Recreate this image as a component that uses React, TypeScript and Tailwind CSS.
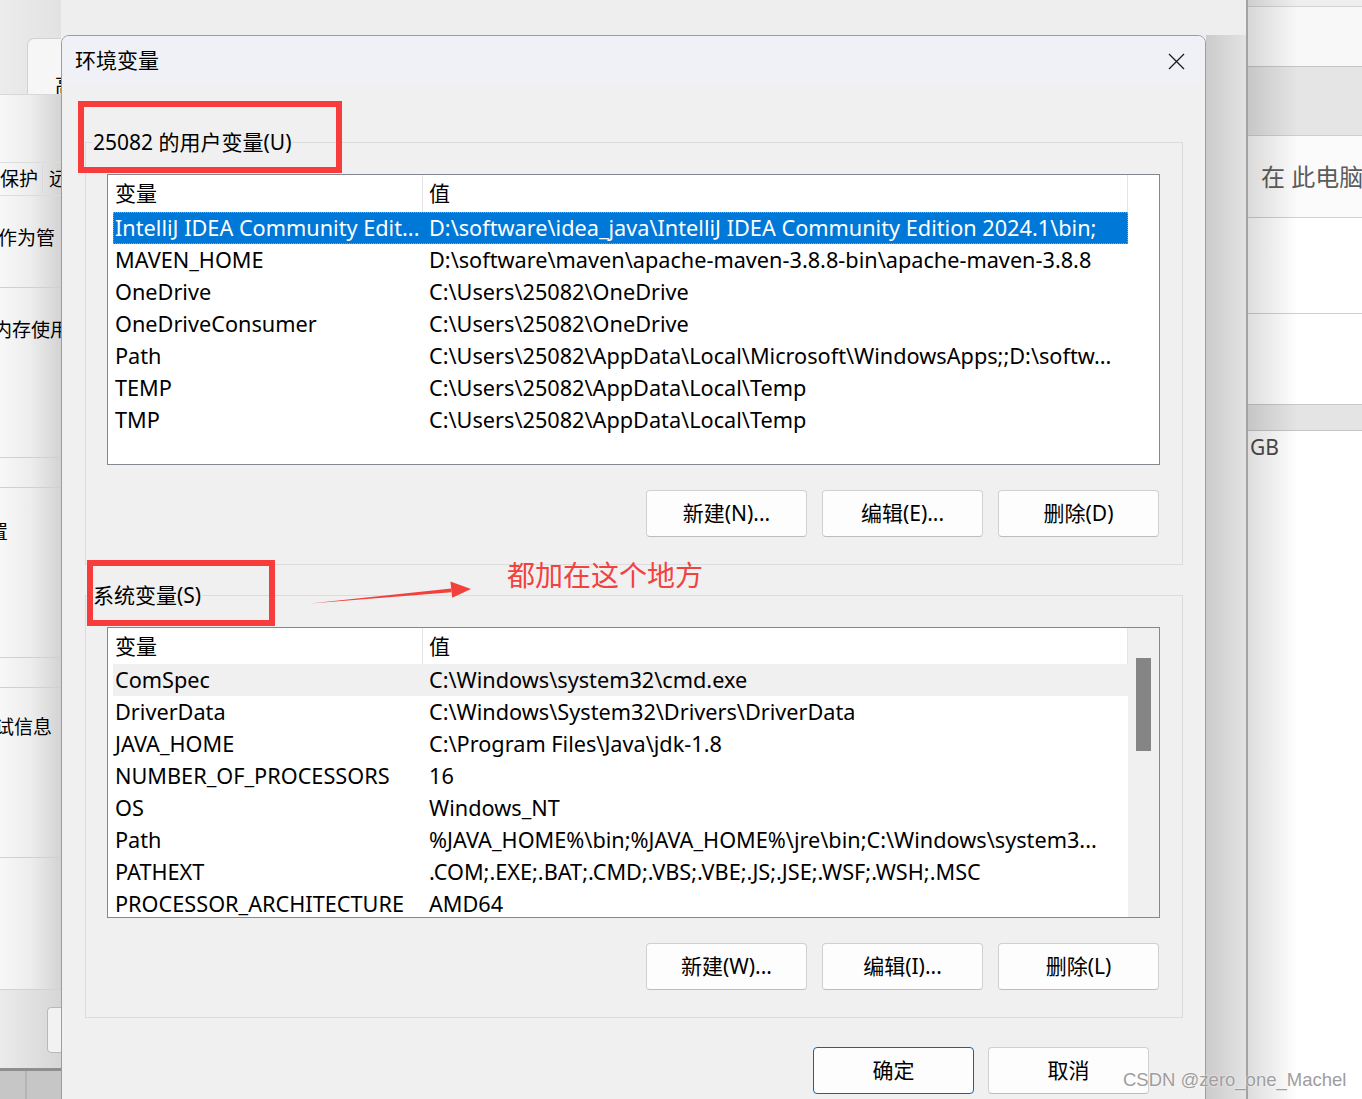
import React from "react";

type Row = [string, string];

const userRows: Row[] = [
  ["IntelliJ IDEA Community Edit...", "D:\\software\\idea_java\\IntelliJ IDEA Community Edition 2024.1\\bin;"],
  ["MAVEN_HOME", "D:\\software\\maven\\apache-maven-3.8.8-bin\\apache-maven-3.8.8"],
  ["OneDrive", "C:\\Users\\25082\\OneDrive"],
  ["OneDriveConsumer", "C:\\Users\\25082\\OneDrive"],
  ["Path", "C:\\Users\\25082\\AppData\\Local\\Microsoft\\WindowsApps;;D:\\softw..."],
  ["TEMP", "C:\\Users\\25082\\AppData\\Local\\Temp"],
  ["TMP", "C:\\Users\\25082\\AppData\\Local\\Temp"],
];

const systemRows: Row[] = [
  ["ComSpec", "C:\\Windows\\system32\\cmd.exe"],
  ["DriverData", "C:\\Windows\\System32\\Drivers\\DriverData"],
  ["JAVA_HOME", "C:\\Program Files\\Java\\jdk-1.8"],
  ["NUMBER_OF_PROCESSORS", "16"],
  ["OS", "Windows_NT"],
  ["Path", "%JAVA_HOME%\\bin;%JAVA_HOME%\\jre\\bin;C:\\Windows\\system3..."],
  ["PATHEXT", ".COM;.EXE;.BAT;.CMD;.VBS;.VBE;.JS;.JSE;.WSF;.WSH;.MSC"],
  ["PROCESSOR_ARCHITECTURE", "AMD64"],
];

function VarList({ rows, headerClass, selected, hovered, scroll }: {
  rows: Row[];
  headerClass: string;
  selected?: number;
  hovered?: number;
  scroll?: boolean;
}) {
  return (
    <div className="flex h-[291px] overflow-hidden border border-[#828790] bg-white">
      <div className="w-[1020px] shrink-0 overflow-hidden pl-[5px]">
        {/* cabecera */}
        <div className={`flex ${headerClass} text-[21px] leading-none`}>
          <div className="flex h-full w-[310px] items-center border-r border-[#e5e5e5] pl-[2px]">变量</div>
          <div className="flex h-full flex-1 items-center border-r border-[#e5e5e5] pl-[6px]">值</div>
        </div>
        {rows.map((r, i) => {
          const sel = i === selected;
          const hov = i === hovered;
          return (
            <div
              key={i}
              className={`flex h-[32px] whitespace-nowrap text-[21.7px] leading-[31px] ${
                sel ? "bg-[#0078d7] text-white outline-1 -outline-offset-1 outline-dotted outline-[#d98f3e]" : hov ? "bg-[#f0f0f0]" : ""
              }`}
            >
              <div className="w-[314px] shrink-0 overflow-hidden pl-[2px]">{r[0]}</div>
              <div className="flex-1 overflow-hidden pl-[2px]">{r[1]}</div>
            </div>
          );
        })}
      </div>
      {scroll ? (
        <div className="flex-1 bg-[#f0f0f0] pl-[8px] pt-[30px]">
          <div className="h-[93px] w-[15px] bg-[#858585]" />
        </div>
      ) : null}
    </div>
  );
}

function Btn({ label, primary }: { label: string; primary?: boolean }) {
  return (
    <button
      className={`flex h-[47px] w-[161px] items-center justify-center rounded-[4px] border bg-[#fdfdfd] text-[21px] leading-none ${
        primary ? "border-[#0067c0]" : "border-[#d0d0d0] border-b-[#bdbdbd]"
      }`}
    >
      {label}
    </button>
  );
}

function GroupBox({ title, children, className = "" }: { title: string; children: React.ReactNode; className?: string }) {
  return (
    <div className={`border border-[#dcdcdc] pb-[27px] pl-[21px] pr-[22px] ${className}`}>
      <div className="-ml-[15px] -mt-[15px] w-fit bg-[#f0f0f0] px-[1px] text-[21px] leading-[28px]">{title}</div>
      {children}
    </div>
  );
}

function LeftWindow() {
  return (
    <div className="absolute left-0 top-0 flex h-[1099px] w-[61px] flex-col overflow-hidden whitespace-nowrap text-[19px] leading-[28px]">
      {/* pestaña superior */}
      <div className="flex h-[94px] bg-gradient-to-r from-[#ececec] to-[#e2e2e2]">
        <div className="ml-[27px] mt-[38px] flex-1 rounded-tl-[7px] border-l border-t border-[#d2d2d2] bg-[#f6f6f6] pl-[27px] pt-[33px] text-[20px]">高</div>
      </div>
      <div className="flex flex-1 flex-col bg-gradient-to-r from-[#f8f8f8] via-[#ededed] to-[#d3d3d3]">
        <div className="h-[68px] border-t border-[#d8d8d8]" />
        <div className="flex h-[34px] items-center border-y border-[#dcdcdc]">
          <span className="-ml-[38px] w-[81px] shrink-0 border-r border-[#d8d8d8]">系统保护</span>
          <span className="pl-[6px]">远</span>
        </div>
        <div className="h-[91px] pt-[28px]"><span className="-ml-[2px] block">作为管</span></div>
        <div className="h-[170px] border-t border-[#d0d0d0] pt-[28px]"><span className="-ml-[7px] block">内存使用</span></div>
        <div className="h-[30px] border-t border-[#d0d0d0]" />
        <div className="h-[170px] border-t border-[#d0d0d0] pt-[30px]"><span className="-ml-[30px] block">设置</span></div>
        <div className="h-[30px] border-t border-[#d0d0d0]" />
        <div className="h-[170px] border-t border-[#d0d0d0] pt-[25px]"><span className="-ml-[24px] block">调试信息</span></div>
        <div className="h-[132px] border-t border-[#d0d0d0]" />
        <div className="h-[79px] border-t border-[#d2d2d2] bg-gradient-to-r from-[#ebebeb] to-[#d6d6d6] pl-[47px] pt-[17px]">
          <div className="h-[46px] w-[40px] rounded-[4px] border border-[#b8b8b8] bg-[#f2f2f2]" />
        </div>
      </div>
      <div className="flex h-[31px] border-t-[3px] border-[#8e8e8e] bg-[#c6c6c6]">
        <div className="w-[27px] border-r-2 border-[#b4b4b4]" />
      </div>
    </div>
  );
}

function RightWindow() {
  return (
    <div className="absolute left-[1246px] top-0 flex h-[1099px] w-[116px] flex-col overflow-hidden border-l-2 border-[#a3a3a3] bg-white whitespace-nowrap">
      <div className="h-[7px] border-b border-[#d4d4d4] bg-[#efefef]" />
      <div className="h-[60px] border-b border-[#c6c6c6] bg-[#f8f8f8]" />
      <div className="h-[69px] border-b border-[#cfcfcf] bg-[#e5e5e5]" />
      <div className="flex h-[82px] flex-col justify-center border-b border-[#d0d0d0] bg-[#fbfbfb] pl-[13px] text-[24px] leading-none text-[#5c5c5c]">在 此电脑</div>
      <div className="h-[96px] border-b border-[#d0d0d0]" />
      <div className="h-[91px] border-b border-[#c8c8c8]" />
      <div className="h-[26px] border-b border-[#c6c6c6] bg-[#e4e4e4]" />
      <div className="pl-[2px] pt-[2px] text-[21px] leading-[28px] text-[#4a4a4a]">GB</div>
      {/* sombra del diálogo */}
      <div className="absolute inset-y-0 left-0 w-[50px] bg-gradient-to-r from-[#00000022] to-transparent" />
    </div>
  );
}

function Dialog() {
  return (
    <div className="absolute left-[61px] top-[35px] h-[1080px] w-[1145px] overflow-hidden rounded-t-[8px] border border-[#9d9d9d] bg-[#f0f0f0]">
      {/* BARRA DE TÍTULO */}
      <div className="flex h-[50px] items-center justify-between bg-[#eff1f7] pl-[13px] pr-[20px]">
        <span className="-mt-[2px] text-[21px] leading-none">环境变量</span>
        <svg width="17" height="17" viewBox="0 0 17 17" className="mt-[1px]">
          <path d="M1 1 L16 16 M16 1 L1 16" stroke="#1a1a1a" strokeWidth="1.3" />
        </svg>
      </div>

      <div className="pl-[23px] pr-[22px] pt-[56px]">
        <GroupBox title="25082 的用户变量(U)">
          <div className="mt-[18px]">
            <VarList rows={userRows} headerClass="h-[37px]" selected={0} />
          </div>
          <div className="mt-[25px] flex justify-end gap-[15px] pr-[1px]">
            <Btn label="新建(N)..." />
            <Btn label="编辑(E)..." />
            <Btn label="删除(D)" />
          </div>
        </GroupBox>

        <GroupBox title="系统变量(S)" className="mt-[30px]">
          <div className="mt-[18px]">
            <VarList rows={systemRows} headerClass="h-[36px]" hovered={0} scroll />
          </div>
          <div className="mt-[25px] flex justify-end gap-[15px] pr-[1px]">
            <Btn label="新建(W)..." />
            <Btn label="编辑(I)..." />
            <Btn label="删除(L)" />
          </div>
        </GroupBox>

        <div className="mt-[29px] flex justify-end gap-[14px] pr-[34px]">
          <Btn label="确定" primary />
          <Btn label="取消" />
        </div>
      </div>
    </div>
  );
}

export default function App() {
  return (
    <div className="relative h-[1099px] w-[1362px] overflow-hidden bg-[#eeeeee] font-['Noto_Sans','Noto_Sans_CJK_SC',sans-serif] text-black">
      <LeftWindow />
      <RightWindow />
      <div className="absolute left-[1206px] top-[35px] h-[1064px] w-[40px] bg-gradient-to-r from-[#cbcbcb] to-[#e3e3e3]" />
      <Dialog />

      {/* ANOTACIONES EN ROJO */}
      <div className="absolute left-[78px] top-[101px] h-[72px] w-[264px] border-[6px] border-[#f83b3b]" />
      <div className="absolute left-[87px] top-[560px] h-[66px] w-[188px] border-[6px] border-[#f83b3b]" />
      <svg className="absolute left-[300px] top-[575px]" width="180" height="40" viewBox="0 0 180 40">
        <polygon points="10,28.6 151.5,17.2 151.2,13.4" fill="#f2403c" />
        <polygon points="171,14 150.4,6.5 152.2,22.8" fill="#f2403c" />
      </svg>
      <div className="absolute left-[507px] top-[559px] text-[28px] leading-[32px] text-[#f2423f]">都加在这个地方</div>

      {/* marca de agua */}
      <div className="absolute left-[1123px] top-[1068px] font-['Liberation_Sans',sans-serif] text-[18.5px] leading-[24px] text-[#9e9e9e] [text-shadow:0_0_2px_#ffffff]">
        CSDN @zero_one_Machel
      </div>
    </div>
  );
}
